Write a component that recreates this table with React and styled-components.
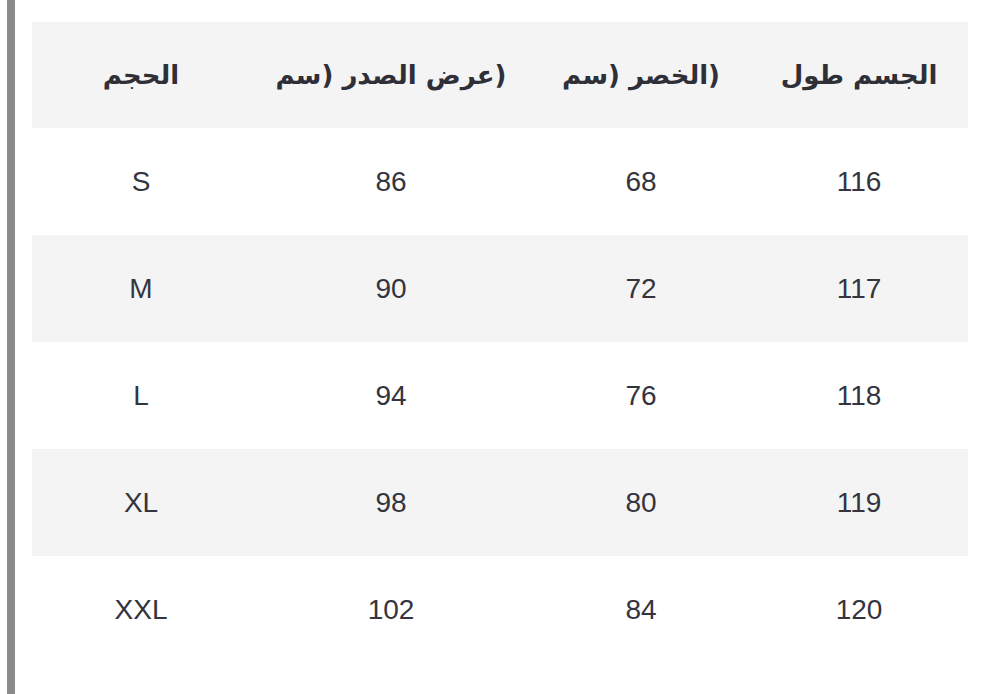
import React from 'react';
import styled, { createGlobalStyle } from 'styled-components';

const GlobalStyle = createGlobalStyle`
  html, body {
    margin: 0;
    padding: 0;
    background: #ffffff;
  }
  body {
    font-family: "Liberation Sans", Arial, sans-serif;
  }
`;

const Page = styled.div`
  display: flex;
  width: 1000px;
  height: 694px;
  background: #ffffff;
  overflow: hidden;
`;

const SideRule = styled.div`
  width: 8px;
  margin-left: 7px;
  background: #8a8a8a;
  flex-shrink: 0;
`;

const Table = styled.div`
  width: 936px;
  margin: 22px 0 0 17px;
  display: flex;
  flex-direction: column;
`;

const Row = styled.div`
  display: grid;
  grid-template-columns: 218px 282px 218px 1fr;
  height: ${props => (props.header ? '106px' : '107px')};
  background: ${props => (props.shaded ? '#f4f4f5' : '#ffffff')};
  align-items: center;
`;

const HeadCell = styled.div`
  text-align: center;
  font-family: "DejaVu Sans", "Noto Sans", sans-serif;
  font-weight: 700;
  font-size: 26px;
  color: #2f2f38;
  direction: rtl;
  unicode-bidi: isolate;
`;

const Cell = styled.div`
  text-align: center;
  font-family: "Liberation Sans", Arial, sans-serif;
  font-size: 28px;
  color: #34343e;
`;

const headers = ['الحجم', '(عرض الصدر (سم', '(الخصر (سم', 'الجسم طول'];

const rows = [
  ['S', '86', '68', '116'],
  ['M', '90', '72', '117'],
  ['L', '94', '76', '118'],
  ['XL', '98', '80', '119'],
  ['XXL', '102', '84', '120'],
];

export default function App() {
  return (
    <>
      <GlobalStyle />
      <Page>
        <SideRule />
        <Table>
          <Row header shaded>
            {headers.map(h => (
              <HeadCell key={h}>{h}</HeadCell>
            ))}
          </Row>
          {rows.map((r, i) => (
            <Row key={r[0]} shaded={i % 2 === 1}>
              {r.map((v, j) => (
                <Cell key={j}>{v}</Cell>
              ))}
            </Row>
          ))}
        </Table>
      </Page>
    </>
  );
}
